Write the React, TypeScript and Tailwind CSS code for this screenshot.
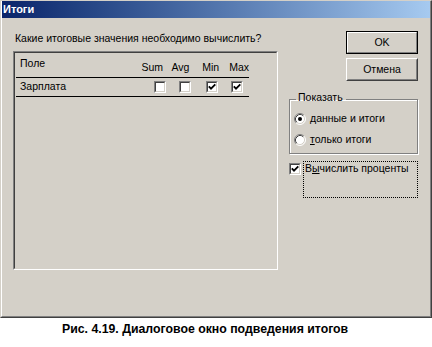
import React from "react";

function CheckBox({ checked = false }: { checked?: boolean }) {
  return (
    <div className="w-[12px] h-[12px] shrink-0 border border-t-[#808080] border-l-[#808080] border-r-white border-b-white">
      <div className="w-full h-full border border-t-[#404040] border-l-[#404040] border-r-[#d4d0c8] border-b-[#d4d0c8] bg-white flex items-center justify-center">
        {checked && (
          <svg width="8" height="8" viewBox="0 0 8 8">
            <path d="M0.8 3.4 L3 5.7 L7.3 1.3" fill="none" stroke="#000" strokeWidth="1.8" />
          </svg>
        )}
      </div>
    </div>
  );
}

function Radio({ checked = false }: { checked?: boolean }) {
  return (
    <svg width="12" height="12" viewBox="0 0 12 12" className="shrink-0">
      <circle cx="6" cy="6" r="5" fill="#fff" />
      <path d="M2.11 9.89 A5.5 5.5 0 0 1 9.89 2.11" fill="none" stroke="#808080" />
      <path d="M9.89 2.11 A5.5 5.5 0 0 1 2.11 9.89" fill="none" stroke="#fff" />
      <path d="M2.82 9.18 A4.5 4.5 0 0 1 9.18 2.82" fill="none" stroke="#404040" />
      <path d="M9.18 2.82 A4.5 4.5 0 0 1 2.82 9.18" fill="none" stroke="#d4d0c8" />
      {checked && <circle cx="6" cy="6" r="2" fill="#000" />}
    </svg>
  );
}

export default function App() {
  return (
    <div className="w-[432px] h-[347px] bg-white text-black font-['Liberation_Sans',Arial,sans-serif] text-[10.5px] leading-[13px]">
      {/* Dialog window */}
      <div className="w-[432px] h-[318px] bg-[#d4d0c8] flex flex-col border border-t-[#d4d0c8] border-l-[#d4d0c8] border-r-[#404040] border-b-[#404040]">
        <div className="flex-1 flex flex-col border-l border-r border-b border-l-white border-r-[#808080] border-b-[#808080]">
          {/* Title bar */}
          <div className="h-[17px] bg-linear-to-r from-[#0a246a] to-[#a6caf0] flex items-center pl-[1px]">
            <span className="text-white font-bold text-[11px]">Итоги</span>
          </div>

          <div className="flex">
            {/* Left column */}
            <div className="pl-[11px] pt-[14px]">
              <p className="ml-[2px]">Какие итоговые значения необходимо вычислить?</p>
              <div className="mt-[6px] w-[265px] h-[219px] border border-t-[#808080] border-l-[#808080] border-r-white border-b-white">
                <div className="w-full h-full border border-t-[#404040] border-l-[#404040] border-r-[#d4d0c8] border-b-[#d4d0c8] pl-[1px]">
                  <div className="w-[233px] h-[25px] border-b border-black flex items-start pl-[4px]">
                    <span className="w-[122px] mt-[4px]">Поле</span>
                    <span className="w-[30px] mt-[8px]">Sum</span>
                    <span className="w-[31px] mt-[8px]">Avg</span>
                    <span className="w-[27px] mt-[8px]">Min</span>
                    <span className="mt-[8px]">Max</span>
                  </div>
                  <div className="w-[233px] h-[19px] border-b border-black flex items-start pl-[4px]">
                    <span className="w-[134px] mt-[2px]">Зарплата</span>
                    <div className="mt-[3px] flex">
                      <CheckBox />
                      <div className="w-[13px]" />
                      <CheckBox />
                      <div className="w-[15px]" />
                      <CheckBox checked />
                      <div className="w-[13px]" />
                      <CheckBox checked />
                    </div>
                  </div>
                </div>
              </div>
            </div>

            {/* Right column */}
            <div className="ml-[11px] pt-[13px] w-[129px] flex flex-col">
              <div className="ml-[57px] w-[72px] h-[23px] border border-black">
                <div className="w-full h-full border border-t-white border-l-white border-r-[#808080] border-b-[#808080] flex items-center justify-center">
                  OK
                </div>
              </div>
              <div className="ml-[57px] mt-[4px] w-[72px] h-[23px] border border-t-white border-l-white border-r-[#404040] border-b-[#404040]">
                <div className="w-full h-full border border-t-[#d4d0c8] border-l-[#d4d0c8] border-r-[#808080] border-b-[#808080] flex items-center justify-center">
                  Отмена
                </div>
              </div>

              <fieldset className="mt-[10px] w-[129px] border border-[#808080] shadow-[inset_1px_1px_0_#fff,1px_1px_0_#fff] pl-[4px] pb-[7px]">
                <legend className="ml-[2px] pl-[2px] pr-[3px] pb-[4px] leading-[13px]">Показать</legend>
                <div className="mt-[4px] flex items-center h-[13px]">
                  <Radio checked />
                  <span className="ml-[4px]">
                    <u className="underline-offset-1">д</u>анные и итоги
                  </span>
                </div>
                <div className="mt-[8px] flex items-center h-[13px]">
                  <Radio />
                  <span className="ml-[4px]">
                    <u className="underline-offset-1">т</u>олько итоги
                  </span>
                </div>
              </fieldset>

              <div className="mt-[7px] flex items-start">
                <div className="mt-[2px]">
                  <CheckBox checked />
                </div>
                <div className="ml-[2px] w-[115px] h-[37px] border border-dotted border-black pl-[1px]">
                  В<u className="underline-offset-1">ы</u>числить проценты
                </div>
              </div>
            </div>
          </div>
        </div>
      </div>

      {/* Caption */}
      <div className="pl-[62px] pt-[4px] text-[12.3px] font-bold leading-[15px]">
        Рис. 4.19. Диалоговое окно подведения итогов
      </div>
    </div>
  );
}
